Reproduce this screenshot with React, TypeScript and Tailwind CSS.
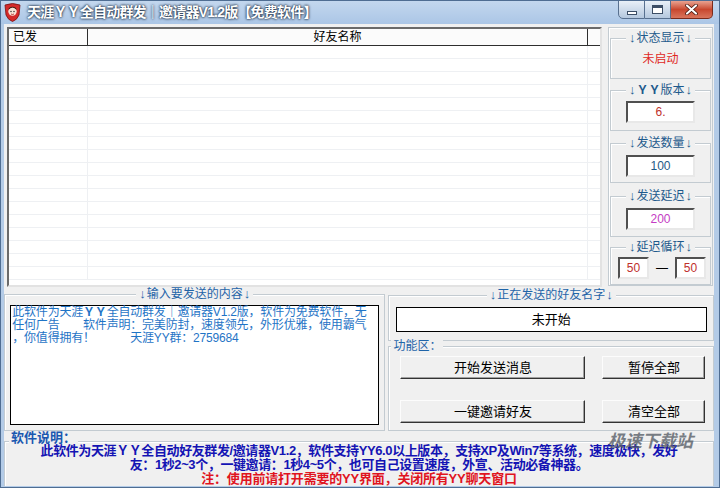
import React from "react"

const font = "font-['Liberation_Sans','Noto_Sans_CJK_SC',sans-serif]"

function GroupTitle({ children, className = "" }: { children: React.ReactNode; className?: string }) {
  return (
    <div className={`-mt-[8px] leading-[14px] bg-[#f0f0f0] px-[2px] whitespace-nowrap ${className}`}>
      {children}
    </div>
  )
}

function Sunken({ children, className = "" }: { children: React.ReactNode; className?: string }) {
  return (
    <div
      className={`border-2 border-t-[#505050] border-l-[#505050] border-b-[#e8e8e8] border-r-[#e8e8e8] bg-white flex items-center justify-center text-[12px] ${className}`}
    >
      {children}
    </div>
  )
}

function Btn({ label, className = "" }: { label: string; className?: string }) {
  return (
    <button
      className={`h-[23px] bg-[#f0f0f0] border border-t-[#fcfcfc] border-l-[#fcfcfc] border-b-[#333] border-r-[#333] shadow-[inset_-1px_-1px_0_#a0a0a0] text-[13px] text-black flex items-center justify-center ${className}`}
    >
      {label}
    </button>
  )
}

function SideBox({ title, className = "", children }: { title: React.ReactNode; className?: string; children: React.ReactNode }) {
  return (
    <div className={`mx-[1px] border border-[#c3cbd1] shadow-[inset_1px_1px_0_#fff] flex flex-col items-center ${className}`}>
      <GroupTitle className="text-[12px] text-[#1e5a8c]">{title}</GroupTitle>
      {children}
    </div>
  )
}

function Arrow() {
  return <span className="text-[13px] px-[1px]">↓</span>
}

function AppIcon() {
  return (
    <svg width="17" height="19" viewBox="0 0 17 19">
      <path d="M1 2 Q8.5 -1 16 2 L15 12 Q13 17 8.5 18.5 Q4 17 2 12 Z" fill="#d42a2a" stroke="#7a1010" strokeWidth="0.8" />
      <circle cx="8.5" cy="8.5" r="4.2" fill="#f6e3d6" />
      <path d="M4.2 7 Q8.5 2 12.8 7 L12 5 Q8.5 2.5 5 5 Z" fill="#3a1a10" />
      <circle cx="7" cy="8.5" r="0.7" fill="#222" />
      <circle cx="10" cy="8.5" r="0.7" fill="#222" />
      <path d="M7 11 Q8.5 12 10 11" stroke="#b02020" strokeWidth="0.8" fill="none" />
    </svg>
  )
}

export default function App() {
  const rows = Array.from({ length: 18 })

  return (
    <div className={`w-[720px] h-[488px] flex flex-col bg-[#b3cbe7] border border-[#4f6d92] overflow-hidden ${font}`}>
      {/* Title bar */}
      <div className="h-[23px] flex items-start bg-gradient-to-b from-[#c3d7ee] to-[#abc6e6] shrink-0">
        <div className="flex items-center h-[22px] pl-[3px] gap-[6px]">
          <AppIcon />
          <span className="text-white font-bold text-[14px] tracking-[-0.8px] [text-shadow:0_0_2px_#1c2d44,0_0_3px_#1c2d44]">
            天涯ＹＹ全自动群发｜邀请器V1.2版【免费软件】
          </span>
        </div>
        <div className="ml-auto mr-[6px] -mt-[1px] flex">
          <div className="w-[27px] h-[19px] border border-[#58708f] rounded-bl-[5px] bg-gradient-to-b from-[#e9f0f8] to-[#b5c8de] flex items-end justify-center pb-[3px]">
            <div className="w-[10px] h-[4px] border border-[#3c4e66] bg-white" />
          </div>
          <div className="w-[26px] h-[19px] border border-l-0 border-[#58708f] bg-gradient-to-b from-[#e9f0f8] to-[#b5c8de] flex items-center justify-center">
            <div className="w-[11px] h-[9px] border border-[#3c4e66] border-t-[3px] bg-white" />
          </div>
          <div className="w-[42px] h-[19px] border border-l-0 border-[#7a2a1c] rounded-br-[5px] bg-gradient-to-b from-[#e8a290] via-[#c8472e] to-[#d9745c] flex items-center justify-center">
            <svg width="13" height="11" viewBox="0 0 13 11">
              <path d="M2 1.5 L11 9.5 M11 1.5 L2 9.5" stroke="#3b0e06" strokeWidth="3.6" strokeLinecap="round" />
              <path d="M2 1.5 L11 9.5 M11 1.5 L2 9.5" stroke="#fff" strokeWidth="2.2" strokeLinecap="round" />
            </svg>
          </div>
        </div>
      </div>

      {/* Client area */}
      <div className="flex-1 ml-[3px] mr-[5px] mb-[3px] bg-[#f0f0f0] flex flex-col text-black">
        {/* Top row */}
        <div className="flex items-start mt-[3px] pl-[3px]">
          {/* list view */}
          <div className="w-[595px] h-[260px] border-2 border-t-[#6a6a6a] border-l-[#6a6a6a] border-b-[#e2e2e2] border-r-[#e2e2e2] bg-white flex flex-col overflow-hidden">
            <div className="h-[17px] flex border-b border-[#2e2e2e] bg-[#fbfbfb] text-[12px] leading-[16px] shrink-0">
              <div className="w-[79px] border-r border-[#2e2e2e] pl-[4px]">已发</div>
              <div className="w-[500px] border-r border-[#2e2e2e] text-center">好友名称</div>
              <div className="flex-1" />
            </div>
            {rows.map((_, i) => (
              <div key={i} className="h-[13px] flex border-b border-[#eef0f3] shrink-0">
                <div className="w-[79px] border-r border-[#eef0f3]" />
                <div className="w-[500px] border-r border-[#eef0f3]" />
              </div>
            ))}
          </div>

          {/* right panel */}
          <div className="ml-[6px] w-[105px] h-[259px] border border-[#c3cbd1] shadow-[inset_1px_1px_0_#fff] flex flex-col">
            <SideBox title={<><Arrow />状态显示<Arrow /></>} className="mt-[10px] h-[41px]">
              <div className="mt-[7px] text-[12px] leading-[14px] text-[#e0281e]">未启动</div>
            </SideBox>
            <SideBox
              title={
                <>
                  <Arrow />
                  <span className="font-bold">ＹＹ</span>版本<Arrow />
                </>
              }
              className="mt-[11px] h-[41px]"
            >
              <Sunken className="mt-[4px] w-[69px] h-[22px] text-[#c0302c]">6.</Sunken>
            </SideBox>
            <SideBox title={<><Arrow />发送数量<Arrow /></>} className="mt-[12px] h-[41px]">
              <Sunken className="mt-[5px] w-[69px] h-[22px] text-[#1f5a86]">100</Sunken>
            </SideBox>
            <SideBox title={<><Arrow />发送延迟<Arrow /></>} className="mt-[13px] h-[41px]">
              <Sunken className="mt-[5px] w-[69px] h-[22px] text-[#c43cc4]">200</Sunken>
            </SideBox>
            <SideBox title={<><Arrow />延迟循环<Arrow /></>} className="mt-[10px] h-[38px]">
              <div className="mt-[3px] flex items-center w-full pl-[7px]">
                <Sunken className="w-[31px] h-[22px] text-[#c0302c]">50</Sunken>
                <div className="w-[26px] text-center text-[12px]">—</div>
                <Sunken className="w-[31px] h-[22px] text-[#c0302c]">50</Sunken>
              </div>
            </SideBox>
          </div>
        </div>

        {/* Middle row */}
        <div className="flex items-start mt-[7px]">
          <div className="w-[382px] h-[137px] border border-[#c3cbd1] shadow-[inset_1px_1px_0_#fff] flex flex-col items-center">
            <GroupTitle className="text-[12px] text-[#1f64a8]"><Arrow />输入要发送的内容<Arrow /></GroupTitle>
            <div className="mt-[4px] w-[369px] h-[120px] border border-black bg-white px-[1px] text-[12px] leading-[13px] text-[#1f74c6] tracking-[-0.2px] whitespace-nowrap">
              <div>此软件为天涯<span className="font-bold">ＹＹ</span>全自动群发｜邀请器V1.2版，软件为免费软件，无</div>
              <div>任何广告　　软件声明：完美防封，速度领先，外形优雅，使用霸气</div>
              <div>，你值得拥有！　　　天涯YY群：2759684</div>
            </div>
          </div>

          <div className="ml-[3px] w-[326px] flex flex-col">
            <div className="mt-[1px] h-[46px] border border-[#c3cbd1] shadow-[inset_1px_1px_0_#fff] flex flex-col items-center">
              <GroupTitle className="text-[12px] text-[#1f64a8]"><Arrow />正在发送的好友名字<Arrow /></GroupTitle>
              <div className="mt-[5px] w-[311px] h-[25px] border border-black bg-white flex items-center justify-center text-[13px]">
                未开始
              </div>
            </div>
            <div className="mt-[5px] h-[85px] border border-[#c3cbd1] shadow-[inset_1px_1px_0_#fff] flex flex-col">
              <GroupTitle className="self-start ml-[2px] text-[12px] text-[#1f64a8]">功能区：</GroupTitle>
              <div className="mt-[3px] pl-[11px] flex flex-col gap-[21px]">
                <div className="flex gap-[17px]">
                  <Btn label="开始发送消息" className="w-[185px]" />
                  <Btn label="暂停全部" className="w-[103px]" />
                </div>
                <div className="flex gap-[17px]">
                  <Btn label="一键邀请好友" className="w-[185px]" />
                  <Btn label="清空全部" className="w-[103px]" />
                </div>
              </div>
            </div>
          </div>
        </div>

        {/* Description */}
        <div className="relative mt-[10px] flex-1 border border-[#c3cbd1] border-b-0 shadow-[inset_1px_1px_0_#fff] flex flex-col">
          <div className="-mt-[11px] self-start ml-[4px] px-[2px] bg-[#f0f0f0] text-[13px] leading-[13px] font-bold text-[#1a58b0] whitespace-nowrap">
            软件说明：
          </div>
          <div className="text-center text-[13px] leading-[14px] font-bold whitespace-nowrap">
            <div className="text-[#1414b4] tracking-[-0.4px]">
              此软件为天涯ＹＹ全自动好友群发/邀请器V1.2，软件支持YY6.0以上版本，支持XP及Win7等系统，速度极快，发好
            </div>
            <div className="text-[#1414b4] tracking-[-0.4px]">
              友：1秒2~3个，一键邀请：1秒4~5个，也可自己设置速度，外宣、活动必备神器。
            </div>
            <div className="text-[#e0141e] tracking-[-0.2px]">注：使用前请打开需要的YY界面，关闭所有YY聊天窗口</div>
          </div>
          <div className="absolute left-[603px] -top-[10px] text-[17px] leading-[20px] italic font-bold text-[#5a6068] opacity-80">
            极速下载站
          </div>
        </div>
      </div>
    </div>
  )
}
